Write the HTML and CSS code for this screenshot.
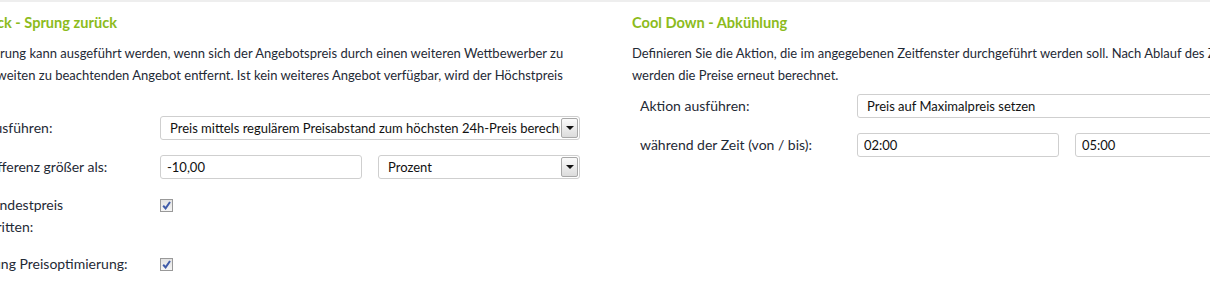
FILE: index.html
```html
<!DOCTYPE html>
<html lang="de">
<head>
    <meta charset="UTF-8">
    <title>Preisoptimierung - Aktionen</title>
    <link rel="stylesheet" href="styles.css">
</head>
<body>
    <div class="page">
        <section class="panel">
            <h2>Knock Back - Sprung zurück</h2>
            <p>Der Preissprung kann ausgeführt werden, wenn sich der Angebotspreis durch einen weiteren Wettbewerber zu weit vom zweiten zu beachtenden Angebot entfernt. Ist kein weiteres Angebot verfügbar, wird der Höchstpreis gesetzt.</p>
            <div class="form">
                <label>Aktion ausführen:</label>
                <div class="select wide">
                    <span class="select-value">Preis mittels regulärem Preisabstand zum höchsten 24h-Preis berechnen</span>
                    <span class="select-arrow"><i></i></span>
                </div>

                <label>Wenn Differenz größer als:</label>
                <input class="field" type="text" value="-10,00">
                <div class="select second">
                    <span class="select-value">Prozent</span>
                    <span class="select-arrow"><i></i></span>
                </div>

                <label class="tall">Wenn Mindestpreis<br>unterschritten:</label>
                <span class="check">
                    <svg viewBox="0 0 10 10"><path d="M2 5.2 L4.2 7.6 L8.2 1.8" /></svg>
                </span>

                <label class="tall">Beendigung Preisoptimierung:</label>
                <span class="check">
                    <svg viewBox="0 0 10 10"><path d="M2 5.2 L4.2 7.6 L8.2 1.8" /></svg>
                </span>
            </div>
        </section>

        <section class="panel">
            <h2>Cool Down - Abkühlung</h2>
            <p>Definieren Sie die Aktion, die im angegebenen Zeitfenster durchgeführt werden soll. Nach Ablauf des Zeitfensters werden die Preise erneut berechnet.</p>
            <div class="form">
                <label>Aktion ausführen:</label>
                <div class="select wide">
                    <span class="select-value">Preis auf Maximalpreis setzen</span>
                    <span class="select-arrow"><i></i></span>
                </div>

                <label>während der Zeit (von / bis):</label>
                <input class="field" type="text" value="02:00">
                <input class="field second" type="text" value="05:00">
            </div>
        </section>
    </div>
</body>
</html>
```

FILE: styles.css
```css
body {
    margin: 0;
    overflow: hidden;
    background: #fff;
    font-family: 'Lato', 'Open Sans', sans-serif;
    font-size: 13px;
    color: #1f2a36;
    border-top: 2px solid #eeeeee;
}
.page {
    display: flex;
    gap: 52px;
    margin-left: -65px;
    width: 1342px;
}
.panel {
    width: 645px;
    flex: none;
}
h2 {
    margin: 12px 0 0;
    font-size: 14.6px;
    line-height: 18px;
    font-weight: bold;
    color: #8cbb1c;
}
p {
    margin: 10px 0 0;
    line-height: 22px;
}
.form {
    display: grid;
    grid-template-columns: 217px 202px 16px 202px;
    row-gap: 15px;
    margin: 8px 0 0 8px;
    align-items: center;
}
.form label {
    grid-column: 1;
    font-size: 14px;
    line-height: 22px;
}
.form label.tall {
    align-self: start;
}
.field {
    grid-column: 2;
    box-sizing: border-box;
    height: 24px;
    width: 202px;
    margin: 0;
    padding: 0 6px;
    border: 1px solid #cfcfcf;
    border-radius: 3px;
    font: inherit;
    color: #111;
    background: #fff;
}
.field.second,
.select.second {
    grid-column: 4;
}
.select {
    grid-column: 2;
    box-sizing: border-box;
    height: 24px;
    display: flex;
    align-items: stretch;
    border: 1px solid #cfcfcf;
    border-radius: 3px;
    background: #fff;
    color: #111;
}
.select.wide {
    grid-column: 2 / 5;
}
.select-value {
    flex: 1;
    overflow: hidden;
    white-space: nowrap;
    padding-left: 9px;
    line-height: 22px;
}
.select-arrow {
    flex: none;
    width: 15px;
    margin: 1px;
    border: 1px solid #a8a8a8;
    border-radius: 2px;
    background: linear-gradient(#fbfbfb, #dcdcdc);
    display: flex;
    align-items: center;
    justify-content: center;
}
.select-arrow i {
    width: 0;
    height: 0;
    border-left: 4px solid transparent;
    border-right: 4px solid transparent;
    border-top: 4px solid #111;
}
.check {
    grid-column: 2;
    align-self: start;
    margin-top: 5px;
    box-sizing: border-box;
    width: 13px;
    height: 13px;
    border: 1px solid #999;
    background: linear-gradient(#e2e2e2, #f5f5f5);
    display: flex;
}
.check svg {
    width: 11px;
    height: 11px;
    fill: none;
    stroke: #3f5ba9;
    stroke-width: 1.8;
}
```
